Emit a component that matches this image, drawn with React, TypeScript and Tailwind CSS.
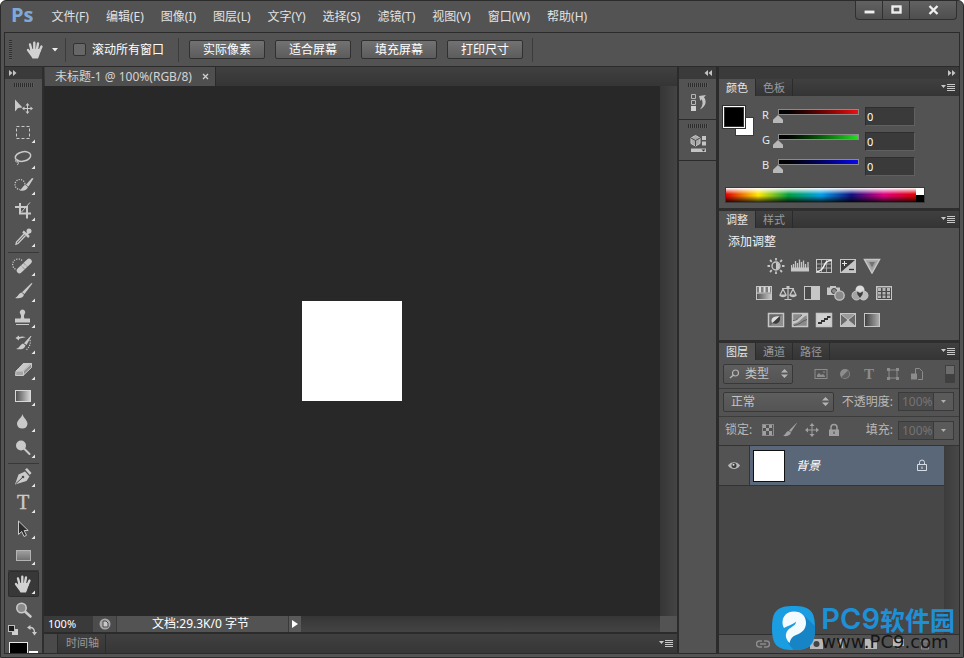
import { useState } from "react";
import type { ReactNode } from "react";
import { clsx } from "clsx";

const UI_FONT = 'font-["Noto_Sans","Noto_Sans_CJK_SC",sans-serif]';

/* ---------- shared bits ---------- */

function Art({ w, h, label, children }: { w: number; h: number; label?: string; children: ReactNode }) {
  return (
    <svg width={w} height={h} viewBox={`0 0 ${w} ${h}`} fill="none" aria-label={label} className="shrink-0">
      {children}
    </svg>
  );
}

function Grip() {
  return (
    <div className="h-1 w-5 bg-[repeating-linear-gradient(90deg,#2c2c2c_0_1px,#5c5c5c_1px_2px)]" />
  );
}

function Chevrons({ left = false }: { left?: boolean }) {
  return (
    <Art w={8} h={6}>
      <g fill="#c4c4c4" transform={left ? "translate(8 0) scale(-1 1)" : undefined}>
        <path d="M0 0l3.500 3L0 6zM4 0l3.500 3L4 6z" />
      </g>
    </Art>
  );
}

function PanelMenu() {
  return (
    <button aria-label="菜单" className="mr-1 ml-auto flex items-center">
      <Art w={14} h={9}>
        <path d="M0 2h5L2.500 5z" fill="#c8c8c8" />
        <path d="M6 1.500h8M6 3.500h8M6 5.500h8M6 7.500h8" stroke="#c8c8c8" />
      </Art>
    </button>
  );
}

const Hand = () => (
  <g stroke="#d2d2d2" strokeLinecap="round">
    <path d="M9.500 13L8 7.500M12.300 12V5.800M15 12l1-5.500M17.500 14l2-4.500" strokeWidth="2.400" />
    <path d="M9 17L6 13" strokeWidth="2.300" />
    <path d="M8.300 12h9.200l1.300 2-1.800 5-1 2.500h-5.500L7.800 17z" fill="#d2d2d2" stroke="none" />
  </g>
);

/* ---------- tool glyphs, each on a 27 x 26 cell ---------- */

const L = "#cacaca";

const toolGroups: { name: string; flyout: boolean; art: ReactNode }[][] = [
  [
    {
      name: "移动",
      flyout: false,
      art: (
        <>
          <path d="M5 5.500v12l3-3.500 4.500-.5z" fill={L} />
          <path d="M17.500 10v9M13 14.500h9" stroke={L} />
          <path d="M17.500 9l2 2.500h-4zM17.500 20l2-2.500h-4zM12 14.500l2.500-2v4zM23 14.500l-2.500-2v4z" fill={L} />
        </>
      ),
    },
    { name: "矩形选框", flyout: true, art: <rect x="6.500" y="6.500" width="13" height="12" stroke={L} strokeDasharray="3 2" /> },
    {
      name: "套索",
      flyout: true,
      art: (
        <>
          <ellipse cx="13" cy="10.500" rx="7.800" ry="4.700" transform="rotate(-12 13 10.500)" stroke={L} strokeWidth="1.500" />
          <path d="M6 14c-1.500 1.500.5 2.500 2 1.500s.5-2-1-1.500M8 16c.8 1.500 0 2.500-1 3" stroke={L} />
        </>
      ),
    },
    {
      name: "快速选择",
      flyout: true,
      art: (
        <>
          <circle cx="10" cy="12.500" r="5" stroke={L} strokeWidth="1.200" strokeDasharray="1.200 1.200" />
          <path d="M23.500 6.500l-5 8-2.500-1.700 6-6.800z" fill={L} />
          <path d="M15.500 13l2.500 2c-1 3-4 4.500-8.500 3.500 2.500-.5 2.500-4.500 6-5.500z" fill={L} />
        </>
      ),
    },
    {
      name: "裁剪",
      flyout: true,
      art: (
        <>
          <path d="M5 9h12v11.500M10 5v10.500h11" stroke={L} strokeWidth="2" />
          <path d="M11.500 14l8.500-9.500" stroke={L} />
        </>
      ),
    },
    {
      name: "吸管",
      flyout: true,
      art: (
        <>
          <path d="M15.500 11.500l-7.500 8-2 .8.500-2.300 7.500-8" stroke={L} strokeWidth="1.300" />
          <path d="M13 7.500l6 5.500M16.500 10.500l3-3" stroke={L} strokeWidth="2.400" />
          <circle cx="19" cy="7" r="2.500" fill={L} />
        </>
      ),
    },
  ],
  [
    {
      name: "污点修复",
      flyout: true,
      art: (
        <>
          <path d="M12 7.500a5.500 5.500 0 1 0-6 9" stroke={L} strokeWidth="1.200" strokeDasharray="1.200 1.200" />
          <path d="M9.500 17.500l9.500-9" stroke={L} strokeWidth="5.500" strokeLinecap="round" />
          <path d="M11 12.500l4.500 4.500M13.500 10l4.500 4.500" stroke="#6b6b6b" strokeDasharray="1 1" />
        </>
      ),
    },
    {
      name: "画笔",
      flyout: true,
      art: (
        <>
          <path d="M22.500 4.500l-8 10.500-2.500-1.800L21.500 4z" fill={L} />
          <path d="M11.500 13.500l2.500 2.200c-1 3.300-4.500 4-9 3.300 3-1.200 3.500-4.500 6.500-5.500z" fill={L} />
        </>
      ),
    },
    {
      name: "仿制图章",
      flyout: true,
      art: (
        <>
          <path d="M12.500 4.500a2.800 2.800 0 0 1 2 4.700c-.7 1-.8 3 0 4.300H20v4H5v-4h5.500c.8-1.300.7-3.300 0-4.300a2.800 2.800 0 0 1 2-4.700z" fill={L} />
          <path d="M6 19.500h13" stroke={L} />
        </>
      ),
    },
    {
      name: "历史记录画笔",
      flyout: true,
      art: (
        <>
          <path d="M21.500 5l-5 9-2.500-1.700L20.500 5z" fill={L} />
          <path d="M13 12.500l2.500 2c-1 3.500-4.500 4.500-9.500 3.500 3.500-.8 4-4.500 7-5.500z" fill={L} />
          <path d="M5.500 7L9 4.500V6c3-1 5-.5 7 .5-2.500 0-4.500.5-7 1.500v1.500z" fill={L} />
          <path d="M20 9c1 4-1 8-4 10" stroke={L} strokeWidth="1.200" strokeDasharray="1.200 1.200" />
        </>
      ),
    },
    {
      name: "橡皮擦",
      flyout: true,
      art: (
        <>
          <path d="M13.500 6h8l-8 8H6z" fill="#c8c8c8" />
          <path d="M13.500 14l8-8v4.500L13 19z" fill="#8f8f8f" />
          <path d="M6 14h7.500L13 18.500H5.500z" fill="#a5a5a5" />
          <path d="M13.500 6.500h8v4L13 18.500H5.500L6 14zM6 14h7.500l8-7.500M13.500 14v4.500" stroke={L} />
        </>
      ),
    },
    {
      name: "渐变",
      flyout: true,
      art: (
        <>
          <linearGradient id="tool-gradient">
            <stop stopColor="#4c4c4c" />
            <stop offset="1" stopColor="#d8d8d8" />
          </linearGradient>
          <rect x="5.500" y="7.500" width="15" height="11" fill="url(#tool-gradient)" stroke="#d8d8d8" />
        </>
      ),
    },
    { name: "模糊", flyout: true, art: <path d="M12.500 5c.5 3.500 5 6 5 10a5.300 5.300 0 0 1-10.500 0c0-4 5-6.500 5.500-10z" fill={L} /> },
    {
      name: "减淡",
      flyout: true,
      art: (
        <>
          <circle cx="11" cy="10.500" r="5" fill={L} />
          <path d="M14.500 14l5 5" stroke={L} strokeWidth="2" strokeLinecap="round" />
        </>
      ),
    },
  ],
  [
    {
      name: "钢笔",
      flyout: true,
      art: (
        <>
          <path d="M5 20.500l3.500-10 6.500-3 4.500 5-3 4.500z" fill={L} />
          <path d="M15 5.500l2-1.500 4.500 5-1.700 2z" fill={L} />
          <path d="M6 19.500l6.500-6" stroke="#4b4b4b" />
          <circle cx="13" cy="13" r="1.300" fill="#4b4b4b" />
        </>
      ),
    },
    {
      name: "文字",
      flyout: true,
      art: (
        <text x="7" y="19" fontSize="20" fill={L} stroke={L} strokeWidth="0.400" className='font-["Liberation_Serif",serif]'>
          T
        </text>
      ),
    },
    {
      name: "路径选择",
      flyout: true,
      art: <path d="M8.500 5v13.500l3.200-3 2.300 5 2.500-1.200-2.300-4.800h4z" fill="#2c2c2c" stroke={L} />,
    },
    {
      name: "矩形",
      flyout: true,
      art: (
        <>
          <linearGradient id="tool-rect" x2="0" y2="1">
            <stop stopColor="#a0a0a0" />
            <stop offset="1" stopColor="#707070" />
          </linearGradient>
          <rect x="6.500" y="8.500" width="14" height="10" fill="url(#tool-rect)" stroke="#b4b4b4" />
        </>
      ),
    },
  ],
  [
    { name: "抓手", flyout: true, art: <Hand /> },
    {
      name: "缩放",
      flyout: false,
      art: (
        <>
          <circle cx="11.500" cy="11" r="4.700" fill="#8a8a8a" stroke={L} strokeWidth="1.600" />
          <path d="M15.500 15l5 4.500" stroke={L} strokeWidth="2.600" strokeLinecap="round" />
        </>
      ),
    },
  ],
];

function Toolbox() {
  const [active, setActive] = useState("抓手");
  return (
    <aside className="flex w-[39px] shrink-0 flex-col overflow-hidden border-r-2 border-[#2e2e2e]">
      <div className="flex h-3 shrink-0 items-center bg-[#3a3a3a] pl-1">
        <Chevrons />
      </div>
      <div className="flex h-[15px] shrink-0 justify-center pt-1">
        <Grip />
      </div>
      <div className="shrink-0 divide-y divide-[#383838]">
        {toolGroups.map((group) => (
          <div key={group[0].name} className="mx-[3px] pb-[2px] last:pb-0">
            {group.map((tool) => (
              <button
                key={tool.name}
                aria-label={tool.name}
                onClick={() => setActive(tool.name)}
                className={clsx(
                  "flex h-[26px] w-full items-center justify-center",
                  active === tool.name && "rounded-xs bg-[#383838] bg-clip-content py-px ring-1 ring-[#2e2e2e] ring-inset",
                )}
              >
                <Art w={27} h={26}>
                  {tool.art}
                  {tool.flyout && <path d="M25 19.500v3.500h-3.500z" fill="#e8e8e8" />}
                </Art>
              </button>
            ))}
          </div>
        ))}
      </div>
      <div className="flex h-[15px] shrink-0 items-center justify-between pr-[5px] pl-[3px]">
        <Art w={11} h={11}>
          <rect x="4" y="4" width="6" height="6" fill="#cfcfcf" />
          <rect x="0.500" y="0.500" width="6" height="6" fill="#1c1c1c" stroke="#bdbdbd" />
        </Art>
        <Art w={10} h={11}>
          <path d="M3 2.500c3.500 0 4.500 1.500 4.500 5" stroke={L} strokeWidth="1.300" />
          <path d="M0 2.500L3.500 0v5zM7.500 10.500L5 7h5z" fill={L} />
        </Art>
      </div>
      <div className="mt-1 flex shrink-0 pl-1">
        <button aria-label="前景色" className="h-6 w-[19px] border border-[#e8e8e8] bg-black" />
        <button aria-label="背景色" className="mt-[9px] ml-px h-6 w-[9px] bg-white" />
      </div>
    </aside>
  );
}

/* ---------- top bars ---------- */

const menus = ["文件(F)", "编辑(E)", "图像(I)", "图层(L)", "文字(Y)", "选择(S)", "滤镜(T)", "视图(V)", "窗口(W)", "帮助(H)"];

function TitleBar() {
  return (
    <header className="flex h-[31px] shrink-0 items-start">
      <span className='ml-[10px] font-["Open_Sans",sans-serif] text-xl leading-7 font-bold text-[#7fa9d8]'>Ps</span>
      <nav className="ml-[18px] flex items-center gap-[17px] text-[12px] leading-8 text-[#e2e2e2]">
        {menus.map((m) => (
          <button key={m} className="whitespace-nowrap">{m}</button>
        ))}
      </nav>
      <div className="mr-[6px] ml-auto flex h-[19px] divide-x divide-[#303030] rounded-b border border-t-0 border-[#303030] bg-linear-to-b from-[#626262] to-[#4e4e4e]">
        <button aria-label="最小化" className="flex w-[27px] justify-center pt-[9px]">
          <Art w={11} h={4}>
            <path d="M0 0h11v4H0z" fill="#eee" stroke="#444" />
          </Art>
        </button>
        <button aria-label="最大化" className="flex w-[27px] justify-center pt-1">
          <Art w={11} h={9}>
            <rect x="1.500" y="1.500" width="8" height="6" stroke="#eee" strokeWidth="2.400" />
          </Art>
        </button>
        <button aria-label="关闭" className="flex w-[46px] justify-center pt-1">
          <Art w={11} h={10}>
            <path d="M1.500 1l8 8M9.500 1l-8 8" stroke="#eee" strokeWidth="2.400" />
          </Art>
        </button>
      </div>
    </header>
  );
}

function OptionsBar() {
  return (
    <div className="flex h-[34px] shrink-0 items-center border-b border-[#2b2b2b] text-[12px] text-white">
      <div className="ml-1 h-5 w-[3px] bg-[repeating-linear-gradient(180deg,#2f2f2f_0_1px,#5c5c5c_1px_2px)]" />
      <button aria-label="抓手工具" className="ml-[10px] flex items-center gap-[3px]">
        <Art w={27} h={26}>
          <Hand />
        </Art>
        <Art w={6} h={4}>
          <path d="M0 0h6L3 3.500z" fill="#eee" />
        </Art>
      </button>
      <div className="ml-[7px] h-6 w-px bg-[#3c3c3c]" />
      <label className="ml-[7px] flex items-center gap-[6px] whitespace-nowrap">
        <input type="checkbox" className="size-[13px] appearance-none rounded-xs border border-[#323232] bg-[#676767]" />
        滚动所有窗口
      </label>
      <div className="mr-[10px] ml-[14px] h-6 w-px bg-[#3c3c3c]" />
      <div className="flex gap-[10px]">
        {["实际像素", "适合屏幕", "填充屏幕", "打印尺寸"].map((t) => (
          <button
            key={t}
            className="h-[19px] w-[76px] rounded-xs border border-[#303030] bg-linear-to-b from-[#727272] to-[#5c5c5c] leading-4"
          >
            {t}
          </button>
        ))}
      </div>
      <div className="ml-[9px] h-6 w-px bg-[#3c3c3c]" />
    </div>
  );
}

/* ---------- document ---------- */

function DocumentArea() {
  return (
    <main className="flex min-w-0 flex-1 flex-col">
      <div className="flex h-[19px] shrink-0 bg-linear-to-b from-[#404040] to-[#353535] pl-px">
        <div className="flex items-center border-r border-[#2b2b2b] bg-[#4f4f4f] pr-[6px] pl-[10px] text-[12px] whitespace-nowrap text-[#d4d4d4]">
          未标题-1 @ 100%(RGB/8)
          <button aria-label="关闭文档" className="ml-[10px]">
            <Art w={7} h={7}>
              <path d="M1 1l5 5M6 1L1 6" stroke="#d0d0d0" strokeWidth="1.300" />
            </Art>
          </button>
        </div>
      </div>
      <div className="flex min-h-0 flex-1">
        <div className="flex flex-1 items-center justify-center bg-[#282828]">
          <div className="size-[100px] bg-white" />
        </div>
        <div className="w-[17px] bg-linear-to-r from-[#363636] to-[#444444]" />
      </div>
      <div className="flex h-4 shrink-0 bg-linear-to-b from-[#363636] to-[#444444] text-[12px] leading-4 text-white">
        <span className="w-[49px] bg-[#3a3a3a] pl-1 text-[11px]">100%</span>
        <button aria-label="导出" className="flex w-6 items-center justify-center border-r border-[#3a3a3a] bg-[#4c4c4c]">
          <Art w={12} h={12}>
            <circle cx="6" cy="6" r="5.500" fill="#a8a8a8" />
            <path d="M4 3h3L9 5v4H4z" fill="#c8c8c8" stroke="#4a4a4a" />
          </Art>
        </button>
        <span className="w-[171px] bg-[#535353] pr-1 text-center whitespace-nowrap">文档:29.3K/0 字节</span>
        <button aria-label="状态菜单" className="flex w-[13px] items-center justify-center border-l border-[#3a3a3a] bg-[#5a5a5a]">
          <Art w={6} h={8}>
            <path d="M0 0l6 4-6 4z" fill="#fff" />
          </Art>
        </button>
        <span className="ml-auto w-[17px] bg-[#535353]" />
      </div>
      <div className="flex h-[21px] shrink-0 border-t-2 border-[#2b2b2b] bg-linear-to-b from-[#404040] to-[#363636]">
        <div className="w-[14px] border-r border-[#2b2b2b] bg-[#4a4a4a]" />
        <div className="flex items-center border-r border-[#2b2b2b] px-[6px] pl-2 text-[11px] text-[#9a9a9a]">时间轴</div>
        <PanelMenu />
      </div>
    </main>
  );
}

function IconDock() {
  return (
    <aside className="flex w-[42px] shrink-0 flex-col border-r-3 border-l-2 border-[#2b2b2b]">
      <div className="flex h-3 items-center justify-end bg-[#3a3a3a] pr-1">
        <Chevrons left />
      </div>
      <button aria-label="历史记录" className="flex h-[41px] flex-col items-center border-b border-[#2b2b2b] pt-1 pl-px">
        <Grip />
        <span className="mt-[7px]">
          <Art w={17} h={17}>
            <path d="M1.500 .5h4v4h-4zM1.500 6.500h4v4h-4z" stroke="#b5b5b5" />
            <path d="M1 12h5v5H1z" fill="#cfcfcf" />
            <path d="M9 2l7-1-2 2.200c3 4 2 9-4 12.300 3-4 3.200-7.500 1.500-10.300L10.500 7z" fill="#c4c4c4" />
          </Art>
        </span>
      </button>
      <button aria-label="属性" className="flex h-[41px] flex-col items-center border-b border-[#2b2b2b] pt-1 pl-px">
        <Grip />
        <span className="mt-[7px]">
          <Art w={17} h={18}>
            <path d="M1 3l4.500-2.500L10 3v5.500L5.500 11 1 8.500z" fill="#a8a8a8" stroke="#c9c9c9" />
            <path d="M1 3l4.500 2.500L10 3M5.500 5.500V11" stroke="#4a4a4a" />
            <path d="M12 1h4v4h-4zM12 6.500h4v4h-4zM1 13.500h15v3.500H1z" fill="#c4c4c4" />
            <path d="M11.500 14.500h4l-2 2z" fill="#333" />
          </Art>
        </span>
      </button>
    </aside>
  );
}

/* ---------- right panels ---------- */

function PanelTabs({ tabs }: { tabs: string[] }) {
  return (
    <div className="flex h-[17px] shrink-0 bg-linear-to-b from-[#404040] to-[#343434] text-[11px] leading-4">
      {tabs.map((t, i) => (
        <button
          key={t}
          className={clsx("border-r border-[#2b2b2b] px-[7px] pt-px whitespace-nowrap", i === 0 ? "bg-[#535353] text-[#e6e6e6]" : "text-[#9a9a9a]")}
        >
          {t}
        </button>
      ))}
      <PanelMenu />
    </div>
  );
}

const channels = [
  { name: "R", track: "[&::-webkit-slider-runnable-track]:bg-linear-to-r [&::-webkit-slider-runnable-track]:from-black [&::-webkit-slider-runnable-track]:to-[#f01010]" },
  { name: "G", track: "[&::-webkit-slider-runnable-track]:bg-linear-to-r [&::-webkit-slider-runnable-track]:from-black [&::-webkit-slider-runnable-track]:to-[#22e022]" },
  { name: "B", track: "[&::-webkit-slider-runnable-track]:bg-linear-to-r [&::-webkit-slider-runnable-track]:from-black [&::-webkit-slider-runnable-track]:to-[#0808f0]" },
];

function ColorPanel() {
  const [values, setValues] = useState([0, 0, 0]);
  const update = (i: number, v: number) => setValues(values.map((old, k) => (k === i ? v : old)));
  return (
    <section className="flex h-[129px] shrink-0 flex-col">
      <PanelTabs tabs={["颜色", "色板"]} />
      <div className="flex pt-[11px]">
        <div className="ml-[5px] grid w-[30px] grid-cols-1 grid-rows-1">
          <button aria-label="背景色" className="col-start-1 row-start-1 mt-[10px] ml-[11px] size-[19px] border border-[#3a3a3a] bg-white" />
          <button aria-label="前景色" className="col-start-1 row-start-1 size-5 border border-[#303030] bg-black ring-1 ring-white outline outline-[#303030] outline-offset-1" />
        </div>
        <div className="ml-2 flex flex-col gap-[6px]">
          {channels.map((c, i) => (
            <div key={c.name} className="flex h-[19px]">
              <label htmlFor={`slider-${c.name}`} className="w-4 text-[11px] leading-4 text-[#e6e6e6]">
                {c.name}
              </label>
              <input
                id={`slider-${c.name}`}
                type="range"
                min={0}
                max={255}
                value={values[i]}
                onChange={(e) => update(i, Number(e.target.value))}
                className={clsx(
                  "mt-[2px] h-[6px] w-[81px] appearance-none bg-transparent",
                  "[&::-webkit-slider-runnable-track]:h-[6px] [&::-webkit-slider-runnable-track]:border [&::-webkit-slider-runnable-track]:border-[#8a8a8a]",
                  "[&::-webkit-slider-thumb]:mt-[5px] [&::-webkit-slider-thumb]:ml-[-6px] [&::-webkit-slider-thumb]:h-2 [&::-webkit-slider-thumb]:w-[10px] [&::-webkit-slider-thumb]:appearance-none",
                  "[&::-webkit-slider-thumb]:bg-[#b8b8b8] [&::-webkit-slider-thumb]:[clip-path:polygon(50%_0,100%_60%,100%_100%,0_100%,0_60%)]",
                  c.track,
                )}
              />
              <input
                aria-label={`${c.name} 值`}
                value={values[i]}
                onChange={(e) => update(i, Number(e.target.value) || 0)}
                className="ml-[6px] h-[19px] w-[50px] border border-[#2e2e2e] border-r-[#606060] border-b-[#606060] bg-[#3a3a3a] pl-px text-[11px] text-white"
              />
            </div>
          ))}
        </div>
      </div>
      <div className="mt-[11px] ml-[6px] flex h-[16px] w-[200px] border border-[#3a3a3a]">
        <div className="flex-1 bg-[linear-gradient(180deg,#fff_0%,#fff0_45%,#0000_55%,#000c_100%),linear-gradient(90deg,#e00000,#ffe800_17%,#00a040_33%,#00a0e8_50%,#101080_66%,#e00080_83%,#e00000)]" />
        <div className="w-2 bg-linear-to-b from-white from-50% to-black to-50%" />
      </div>
    </section>
  );
}

const G = "#c6c6c6";

const adjustments: { name: string; art: ReactNode }[][] = [
  [
    {
      name: "亮度/对比度",
      art: (
        <>
          <circle cx="9" cy="8" r="4" stroke={G} strokeWidth="1.400" />
          <path d="M9 4.500a3.500 3.500 0 0 1 0 7z" fill={G} />
          <path d="M9 0v2.500M9 13.500V16M.5 8H3M15 8h2.500M3 2l1.800 1.800M13.200 12.200L15 14M15 2l-1.800 1.800M4.800 12.200L3 14" stroke={G} strokeWidth="1.800" />
        </>
      ),
    },
    {
      name: "色阶",
      art: (
        <>
          <path d="M0 9.500h18v4H0z" fill={G} />
          <path d="M.5 11V7M2.500 11V6M4.500 11V3M6.500 11V5M8.500 11V1.500M10.500 11V4M12.500 11V2.500M14.500 11V6M17 11V4" stroke={G} strokeWidth="1.300" />
        </>
      ),
    },
    {
      name: "曲线",
      art: (
        <>
          <rect x="1.500" y="1.500" width="15" height="13" fill="#4a4a4a" stroke={G} />
          <path d="M6.500 2v12M11.500 2v12M2 6h14M2 10h14" stroke="#a2a2a2" />
          <path d="M2 13.500c9-.5 5-11 14.500-11" stroke="#f2f2f2" strokeWidth="1.600" />
        </>
      ),
    },
    {
      name: "曝光度",
      art: (
        <>
          <rect x="1.500" y="1.500" width="15" height="13" fill="#3c3c3c" stroke={G} />
          <path d="M16 2v12H2z" fill={G} />
          <path d="M3 5.500h5M5.500 3v5" stroke="#e4e4e4" />
          <path d="M10 11.500h5" stroke="#2c2c2c" strokeWidth="1.300" />
        </>
      ),
    },
    {
      name: "自然饱和度",
      art: (
        <>
          <path d="M1.500 1.500h15L9 15z" fill="#a4a4a4" stroke={G} strokeWidth="1.500" />
          <path d="M6 4h6L9 9.500z" fill="#747474" />
        </>
      ),
    },
  ],
  [
    {
      name: "色相/饱和度",
      art: (
        <>
          <linearGradient id="hue-ramp">
            <stop stopColor="#555" />
            <stop offset="1" stopColor="#c6c6c6" />
          </linearGradient>
          <rect x="1.500" y="1.500" width="15" height="13" fill="#7c7c7c" stroke={G} />
          <path d="M5 2v5.500M9.500 2v5.500M14 2v5.500" stroke="#dadada" strokeWidth="2" />
          <path d="M2 9h14v5H2z" fill="url(#hue-ramp)" />
          <path d="M2 8h14" stroke={G} />
        </>
      ),
    },
    {
      name: "色彩平衡",
      art: (
        <>
          <path d="M9 1v13M5.500 14.500h7M3 3.500h12M4 4l-3 6h6zM14 4l-3 6h6z" stroke={G} strokeWidth="1.200" />
          <path d="M.5 10h7c-.5 3-6.500 3-7 0zM10.500 10h7c-.5 3-6.500 3-7 0zM7.500 1h3v3h-3z" fill={G} />
        </>
      ),
    },
    {
      name: "黑白",
      art: (
        <>
          <rect x="1.500" y="1.500" width="15" height="13" fill="#4a4a4a" stroke={G} />
          <path d="M8 2h8v12H8z" fill={G} />
        </>
      ),
    },
    {
      name: "照片滤镜",
      art: (
        <>
          <path d="M0 2.500h3V1h6v1.500h4V10H0z" fill={G} />
          <circle cx="7" cy="6" r="2.500" fill="#8a8a8a" stroke="#444" />
          <circle cx="12.500" cy="10.500" r="4.700" fill="#8a8a8a" stroke={G} strokeWidth="1.300" />
        </>
      ),
    },
    {
      name: "通道混合器",
      art: (
        <>
          <circle cx="9" cy="5" r="4.500" fill="#dcdcdc" />
          <circle cx="5.500" cy="10.500" r="4.500" fill="#a4a4a4" stroke={G} />
          <circle cx="12.500" cy="10.500" r="4.500" fill="#bcbcbc" stroke={G} />
          <path d="M6 6.500l3 1.500 3-1.500-.5 3L9 13 6.500 9.500z" fill="#3c3c3c" />
        </>
      ),
    },
    {
      name: "颜色查找",
      art: (
        <>
          <rect x="1.500" y="1.500" width="15" height="13" fill="#4a4a4a" stroke={G} />
          <path d="M3 3h3v3H3zM7.500 3h3v3h-3zM12 3h3v3h-3zM3 7h3v2.500H3zM7.500 7h3v2.500h-3zM12 7h3v2.500h-3zM3 10.500h3V13H3zM7.500 10.500h3V13h-3zM12 10.500h3V13h-3z" fill="#b4b4b4" />
          <path d="M2 2h14M2 2v12" stroke={G} />
        </>
      ),
    },
  ],
  [
    {
      name: "反相",
      art: (
        <>
          <rect x="1.500" y="1.500" width="15" height="13" fill="#6a6a6a" stroke={G} strokeWidth="1.500" />
          <path d="M16 2v12H3z" fill="#8e8e8e" />
          <path d="M12.500 4.500L5.500 11c-2-2-.8-5 1.500-6 2-.9 4-1 5.500-.5z" fill="#dedede" />
          <path d="M12.500 4.500L5.500 11c2 1.300 5 1 6.500-1 1.400-1.800 1.500-4 .5-5.500z" fill="#3c3c3c" />
        </>
      ),
    },
    {
      name: "色调分离",
      art: (
        <>
          <rect x="1.500" y="1.500" width="15" height="13" fill="#8a8a8a" stroke={G} strokeWidth="1.500" />
          <path d="M2 8c5 0 7-4 9-6h5v1.500C11 4 10 11 2 12z" fill={G} />
          <path d="M2 8.500c5 0 6-4 9-5.500" stroke="#5c5c5c" />
          <path d="M3 13.500c6-.5 8-5 13-6" stroke="#5c5c5c" />
        </>
      ),
    },
    {
      name: "阈值",
      art: (
        <>
          <rect x="1.500" y="1.500" width="15" height="13" fill="#d0d0d0" stroke={G} strokeWidth="1.500" />
          <path d="M3 10h3V8h3V6h3V4h3.500v2H13v2h-3v2H7v2H3z" fill="#333" />
        </>
      ),
    },
    {
      name: "可选颜色",
      art: (
        <>
          <rect x="1.500" y="1.500" width="15" height="13" fill="#6a6a6a" stroke={G} />
          <path d="M2 2h14L9 8z" fill="#9a9a9a" />
          <path d="M2 14h14L9 8z" fill="#c0c0c0" />
          <path d="M2 2l14 12M16 2L2 14" stroke={G} />
        </>
      ),
    },
    {
      name: "渐变映射",
      art: (
        <>
          <linearGradient id="map-gradient">
            <stop stopColor="#3c3c3c" />
            <stop offset="1" stopColor="#b0b0b0" />
          </linearGradient>
          <rect x="1.500" y="1.500" width="15" height="13" fill="url(#map-gradient)" stroke={G} />
        </>
      ),
    },
  ],
];

function AdjustmentsPanel() {
  return (
    <section className="flex h-[129px] shrink-0 flex-col">
      <PanelTabs tabs={["调整", "样式"]} />
      <p className="mt-[6px] pl-[9px] text-[12px] leading-4 text-[#f0f0f0]">添加调整</p>
      <div className="mt-2 flex flex-col items-center gap-[11px] pr-[30px]">
        {adjustments.map((row) => (
          <div key={row[0].name} className="flex gap-[6px]">
            {row.map((a) => (
              <button key={a.name} aria-label={a.name}>
                <Art w={18} h={16}>{a.art}</Art>
              </button>
            ))}
          </div>
        ))}
      </div>
    </section>
  );
}

function Stepper() {
  return (
    <Art w={7} h={9}>
      <path d="M0 3.500h7L3.500 0zM0 5.500h7L3.500 9z" fill="#b4b4b4" />
    </Art>
  );
}

function PercentField({ label }: { label: string }) {
  return (
    <div className="ml-auto flex items-center">
      <label htmlFor={`pct-${label}`} className="text-[12px] whitespace-nowrap text-[#b8b8b8]">{label}:</label>
      <input
        id={`pct-${label}`}
        defaultValue="100%"
        className="ml-[5px] h-[19px] w-9 border border-[#3a3a3a] bg-[#4b4b4b] pl-[3px] text-[12px] text-[#747474]"
      />
      <button aria-label={`${label}滑块`} className="flex h-[19px] w-5 items-center justify-center border border-l-0 border-[#3a3a3a] bg-[#5a5a5a]">
        <Art w={5} h={3}>
          <path d="M0 0h5L2.500 3z" fill="#b0b0b0" />
        </Art>
      </button>
    </div>
  );
}

const Q = "#8c8c8c";

const filterGlyphs: ReactNode[] = [
  <>
    <rect x="1" y="2.500" width="12" height="9" stroke={Q} />
    <path d="M3 10V8l2-2 2 2 2-1 2 2v1z" fill={Q} />
    <path d="M9 5h2" stroke={Q} />
  </>,
  <>
    <circle cx="7" cy="7" r="5" fill={Q} />
    <path d="M10 3.500L3.500 10a4.500 4.500 0 0 0 6.500-6.500z" fill="#606060" />
  </>,
  <text x="2" y="12" fontSize="15" fontWeight="700" fill={Q} className='font-["Liberation_Serif",serif]'>T</text>,
  <>
    <rect x="3" y="3" width="8" height="8" stroke={Q} />
    <path d="M1 1h3v3H1zM10 1h3v3h-3zM1 10h3v3H1zM10 10h3v3h-3z" fill={Q} />
  </>,
  <>
    <path d="M5.500 7V1.500h4l3 3v8H8" stroke={Q} />
    <path d="M1 6.500h6v6H1z" fill={Q} />
  </>,
];

const lockGlyphs: ReactNode[] = [
  <>
    <rect x="1.500" y="1.500" width="11" height="11" stroke={Q} />
    <path d="M2 2h3v3H2zM8 2h3v3H8zM5 5h3v3H5zM2 8h3v4H2zM8 8h3v4H8z" fill="#a0a0a0" />
  </>,
  <path d="M14 0L8 9 6 7.500 13.500 0zM5.500 8L8 9.500C7 13 3.500 13.500 0 13c2.500-1 3-4.500 5.500-5z" fill="#a0a0a0" />,
  <>
    <path d="M7 2v10M2 7h10" stroke="#a0a0a0" />
    <path d="M7 0l2.500 3h-5zM7 14l2.500-3h-5zM0 7l3-2.500v5zM14 7l-3-2.500v5z" fill="#a0a0a0" />
  </>,
  <>
    <path d="M4 7V4.500a3 3 0 0 1 6 0V7" stroke="#a0a0a0" strokeWidth="1.500" />
    <path d="M2 6.500h10V13H2z" fill="#a0a0a0" />
    <path d="M6.500 8.500h1v2.500h-1z" fill="#444" />
  </>,
];

function LayersPanel() {
  return (
    <section className="flex min-h-0 flex-1 flex-col">
      <PanelTabs tabs={["图层", "通道", "路径"]} />
      <div className="flex h-[29px] shrink-0 items-center border-b border-[#3c3c3c] pr-[5px] pb-px pl-1">
        <label className="flex h-5 w-[70px] items-center rounded-xs border border-[#383838] bg-linear-to-b from-[#5e5e5e] to-[#545454] pr-1 pl-[5px]">
          <Art w={11} h={10}>
            <circle cx="6.500" cy="4" r="3" stroke="#b4b4b4" strokeWidth="1.200" />
            <path d="M4.500 6L1 9" stroke="#b4b4b4" strokeWidth="1.500" />
          </Art>
          <select aria-label="过滤类型" className="ml-[5px] min-w-0 flex-1 appearance-none text-[12px] leading-4 text-[#c4c4c4]">
            <option>类型</option>
          </select>
          <Stepper />
        </label>
        <div className="ml-[21px] flex gap-[10px]">
          {filterGlyphs.map((g, i) => (
            <button key={i} aria-label={`过滤 ${i + 1}`}>
              <Art w={14} h={14}>{g}</Art>
            </button>
          ))}
        </div>
        <button aria-label="过滤开关" className="ml-auto h-4 w-2 bg-linear-to-b from-[#6c6c6c] from-50% to-[#404040] to-50% ring-1 ring-[#404040]" />
      </div>
      <div className="flex h-7 shrink-0 items-center border-b border-[#3c3c3c] pr-[5px] pb-[2px] pl-1">
        <label className="flex h-5 w-[111px] items-center rounded-xs border border-[#383838] bg-linear-to-b from-[#5e5e5e] to-[#545454] pr-1 pl-[7px]">
          <select aria-label="混合模式" className="min-w-0 flex-1 appearance-none text-[12px] leading-4 text-[#c4c4c4]">
            <option>正常</option>
          </select>
          <Stepper />
        </label>
        <PercentField label="不透明度" />
      </div>
      <div className="flex h-[29px] shrink-0 items-center border-b border-[#333333] pr-[5px] pb-[2px] pl-[6px]">
        <span className="text-[12px] text-[#b8b8b8]">锁定:</span>
        <div className="ml-[9px] flex gap-2">
          {lockGlyphs.map((g, i) => (
            <button key={i} aria-label={`锁定 ${i + 1}`}>
              <Art w={14} h={14}>{g}</Art>
            </button>
          ))}
        </div>
        <PercentField label="填充" />
      </div>
      <div className="flex min-h-0 flex-1">
        <div className="flex-1 bg-[#474747]">
          <div className="flex h-10 items-center border-b border-[#333333] bg-[#5a6779]">
            <button aria-label="可见性" className="flex w-[31px] items-center justify-center self-stretch border-r border-[#333333] bg-[#535353]">
              <Art w={12} h={9}>
                <path d="M0 4.500C2.500 0 9.500 0 12 4.500 9.500 9 2.500 9 0 4.500z" fill="#b8b8b8" />
                <circle cx="6" cy="4.500" r="2.500" fill="#3a3a3a" />
                <circle cx="5.500" cy="3.800" r="1" fill="#ddd" />
              </Art>
            </button>
            <div className="ml-[3px] size-8 border border-[#111111] bg-white" />
            <span className="ml-[11px] text-[12px] text-white italic">背景</span>
            <span className="mr-4 ml-auto">
              <Art w={12} h={13}>
                <path d="M3.500 5.500V3.500a2.500 2.500 0 0 1 5 0v2M1.500 5.500h9v6h-9z" stroke="#d8dce4" />
                <path d="M5.500 7.500h1v2.500h-1z" fill="#d8dce4" />
              </Art>
            </span>
          </div>
        </div>
        <div className="w-[15px] bg-linear-to-r from-[#3c3c3c] to-[#484848]" />
      </div>
      <div className="flex h-[19px] shrink-0 items-center justify-end gap-[13px] border-t border-[#303030] pr-[27px]">
        {[
          <path key="p" d="M6 4H3.500a3 3 0 0 0 0 6H6M8 4h2.500a3 3 0 0 1 0 6H8M4 7h6" stroke="#8c8c8c" strokeWidth="1.500" />,
          <path key="p" d="M8 3c-2-1-2.500 1-3 4s-1 5-3 4M2.500 6.500h5M8 6.500l4 5M12 6.500l-4 5" stroke="#b8b8b8" />,
          <g key="p">
            <path d="M0 2h13v10H0z" fill="#b8b8b8" />
            <circle cx="6.500" cy="7" r="3" fill="#444" />
          </g>,
          <g key="p">
            <circle cx="6" cy="6.500" r="5" fill="#b8b8b8" />
            <path d="M6 1.500a5 5 0 0 1 0 10z" fill="#6a6a6a" />
          </g>,
          <path key="p" d="M1 2h5l1 2h6v8H1z" fill="#b8b8b8" />,
          <path key="p" d="M2 2h11v7h-4l-2 3-2-3H2z" fill="#b8b8b8" />,
          <path key="p" d="M2 4h10M5 2h4M3.500 5h7v7h-7zM6 6v5M8 6v5" stroke="#8c8c8c" />,
        ].map((g, i) => (
          <button key={i} aria-label={`图层操作 ${i + 1}`}>
            <Art w={14} h={14}>{g}</Art>
          </button>
        ))}
      </div>
    </section>
  );
}

/* ---------- site badge over the lower right corner ---------- */

function Badge() {
  return (
    <div className="pointer-events-none absolute right-2 bottom-[6px] flex items-center gap-[5px]">
      <svg width="45" height="46" viewBox="0 0 45 46" fill="none">
        <path d="M22.500 1C39 1 44 6 44 23s-5 22-21.500 22S1 40 1 23 6 1 22.500 1z" fill="#1b9de2" />
        <path d="M33 10.500L44 21c.3 17-4.500 24-21.500 24L17 38z" fill="#1784c6" />
        <path
          d="M23 6.500c7.500 0 12 4.500 12 11.500 0 6.500-4.500 10-10 12-3.800 1.400-5.500 3.800-6.500 8-4-4-5-9-1.500-13 3-3.300 8-4.200 8-8.500-2.500 3-7 3.500-12 6.500-1-1.500-1.500-3.200-1.500-5.500C11.500 11 16 6.500 23 6.500z"
          fill="#f4fbff"
        />
      </svg>
      <div className="flex flex-col">
        <div className="flex items-center font-bold text-[#1e90d6]">
          <span className='font-["Inter",sans-serif] text-[29px] leading-7 font-semibold'>PC9</span>
          <span className='font-["Noto_Sans_CJK_SC",sans-serif] text-[25px] leading-7'>软件园</span>
        </div>
        <span className='font-["DejaVu_Sans",sans-serif] text-[18px] leading-[18px] text-[#161616]'>www.PC9.com</span>
      </div>
    </div>
  );
}

export default function App() {
  return (
    <div className={clsx("relative flex h-screen flex-col overflow-hidden rounded-t-md border border-[#2b2b2b] bg-[#535353]", UI_FONT)}>
      <TitleBar />
      <div className="mx-[3px] mb-[3px] flex min-h-0 flex-1 flex-col border border-[#2b2b2b]">
        <OptionsBar />
        <div className="flex min-h-0 flex-1">
          <Toolbox />
          <DocumentArea />
          <IconDock />
          <aside className="flex w-[240px] shrink-0 flex-col">
            <div className="flex h-3 shrink-0 items-center justify-end bg-[#3a3a3a] pr-[3px]">
              <Chevrons />
            </div>
            <ColorPanel />
            <div className="h-[3px] shrink-0 bg-[#2e2e2e]" />
            <AdjustmentsPanel />
            <div className="h-[3px] shrink-0 bg-[#2e2e2e]" />
            <LayersPanel />
          </aside>
        </div>
      </div>
      <Badge />
    </div>
  );
}
